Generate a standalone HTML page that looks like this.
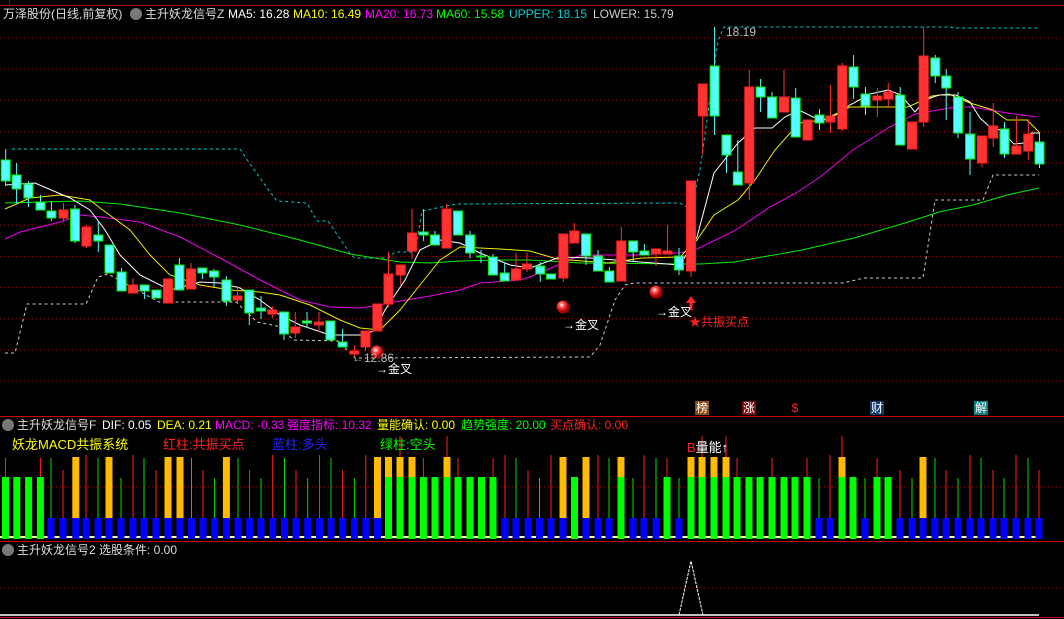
<!DOCTYPE html>
<html><head><meta charset="utf-8"><style>
body{margin:0;background:#000;width:1064px;height:619px;overflow:hidden;position:relative;font-family:"Liberation Sans","Noto Sans CJK SC",sans-serif;}
.t{position:absolute;font-size:12px;white-space:nowrap;line-height:14px}
.ic{position:absolute;width:12px;height:12px;border-radius:50%;background:#777}
.bx{position:absolute;top:401px;width:14px;height:14px;font-size:12px;line-height:14px;text-align:center;color:#fff}
svg{position:absolute;left:0;top:0}
</style></head><body>
<svg id="s" width="1064" height="619"></svg>
<div class="t" style="left:3px;top:7px;color:#ddd">万泽股份(日线,前复权)</div>
<div class="ic" style="left:130px;top:8px"></div>
<div class="t" style="left:145px;top:7px;color:#ddd">主升妖龙信号Z</div>
<div class="t" style="left:228px;top:7px;color:#fff">MA5: 16.28</div>
<div class="t" style="left:293px;top:7px;color:#ff0">MA10: 16.49</div>
<div class="t" style="left:365px;top:7px;color:#f0f">MA20: 16.73</div>
<div class="t" style="left:436px;top:7px;color:#0f0">MA60: 15.58</div>
<div class="t" style="left:509px;top:7px;color:#0cc">UPPER: 18.15</div>
<div class="t" style="left:593px;top:7px;color:#ccc">LOWER: 15.79</div>
<div class="t" style="left:726px;top:25px;color:#bbb">18.19</div>
<div class="t" style="left:352px;top:351px;color:#bbb">←12.86</div>
<div class="t" style="left:376px;top:362px;color:#fff">→金叉</div>
<div class="t" style="left:563px;top:318px;color:#fff">→金叉</div>
<div class="t" style="left:656px;top:305px;color:#fff">→金叉</div>
<div class="t" style="left:689px;top:315px;color:#f22">★共振买点</div>
<div class="bx" style="left:695px;background:#8b4a10">榜</div>
<div class="bx" style="left:742px;background:#7a0a0a">涨</div>
<div class="bx" style="left:788px;color:#f22">$</div>
<div class="bx" style="left:870px;background:#123a6a">财</div>
<div class="bx" style="left:974px;background:#0e7f7f">解</div>
<div class="ic" style="left:2px;top:419px"></div>
<div class="t" style="left:17px;top:418px;color:#ddd">主升妖龙信号F</div>
<div class="t" style="left:102px;top:418px;color:#fff">DIF: 0.05</div>
<div class="t" style="left:157px;top:418px;color:#ff0">DEA: 0.21</div>
<div class="t" style="left:215px;top:418px;color:#f0f">MACD: -0.33</div>
<div class="t" style="left:287px;top:418px;color:#f0f">强度指标: 10.32</div>
<div class="t" style="left:377px;top:418px;color:#ff0">量能确认: 0.00</div>
<div class="t" style="left:461px;top:418px;color:#0f0">趋势强度: 20.00</div>
<div class="t" style="left:550px;top:418px;color:#f22">买点确认: 0.00</div>
<div class="t" style="left:12px;top:438px;color:#ff0;font-size:13px">妖龙MACD共振系统</div>
<div class="t" style="left:163px;top:438px;color:#f22;font-size:13px">红柱:共振买点</div>
<div class="t" style="left:272px;top:438px;color:#22f;font-size:13px">蓝柱:多头</div>
<div class="t" style="left:380px;top:438px;color:#0f0;font-size:13px">绿柱:空头</div>
<div class="t" style="left:687px;top:441px;color:#fff;font-size:13px"><span style="color:#f22">B</span>量能↑</div>
<div class="ic" style="left:2px;top:544px"></div>
<div class="t" style="left:17px;top:543px;color:#ddd">主升妖龙信号2 选股条件: 0.00</div>
<script>
var s='';
function L(x1,y1,x2,y2,c,w,d){s+='<line x1="'+x1+'" y1="'+y1+'" x2="'+x2+'" y2="'+y2+'" stroke="'+c+'" stroke-width="'+(w||1)+'"'+(d?' stroke-dasharray="'+d+'"':'')+'/>';}
function R(x,y,w,h,f,st){s+='<rect x="'+x+'" y="'+y+'" width="'+w+'" height="'+h+'" fill="'+f+'"'+(st?' stroke="'+st+'"':'')+'/>';}
function P(pts,c,d){s+='<polyline fill="none" stroke="'+c+'" stroke-width="1"'+(d?' stroke-dasharray="'+d+'"':'')+' points="'+pts+'"/>';}
for(var y=38;y<390;y+=31.2)L(0,y,1064,y,'#a00',1,'1 3');
L(0,487,1064,487,'#a00',1,'1 3');L(0,588,1064,588,'#a00',1,'1 3');
L(0,416.5,1064,416.5,'#c00');L(0,541.5,1064,541.5,'#c00');L(0,617.5,1064,617.5,'#c00');
L(0,5.5,1064,5.5,'#a00');L(9.5,0,9.5,5,'#a00');
P('5,353 15,353 27,304 86,304 98,277 108,274 159,302 236,302 257,322 277,326 294,340 338,341 355,358 590,357 600,345 615,300 625,285 634,283 843,283 864,278 923,278 935,200 983,200 993,175 1039,175','#ccc','3 3');
P('12,149 240,149 250,164 270,192 277,201 307,203 317,221 328,221 351,255 355,258 388,258 395,252 415,252 422,211 456,204 680,203 687,207 693,200 700,170 707,120 716,53 719,38 724,27 949,27 956,28 1037,28','#0cc','3 3');
P('5,203 80,201 120,204 180,213 240,225 300,240 350,254 400,262 430,263 460,261 500,260 530,260 581,263 680,264 700,264 734,262 802,250 854,238 905,223 939,212 973,205 1007,195 1039,188','#0e0');
P('5,239 20,232 60,222 80,215 100,217 140,222 180,237 220,258 260,280 300,300 330,307 360,308 380,305 400,301 430,296 460,290 480,283 520,280 530,277 581,255 632,255 679,253 697,249 736,230 770,207 796,193 820,177 853,150 888,128 915,114 956,107 972,107 1007,113 1037,117','#e0e');
P('5,209 30,198 60,195 90,200 100,208 130,230 150,255 170,275 200,285 230,290 260,292 280,295 310,305 340,320 360,328 380,330 400,310 420,285 440,260 460,247 500,249 530,251 557,259 608,263 642,258 680,257 697,240 714,215 738,200 755,180 775,150 799,123 823,120 850,107 884,107 908,107 932,96 949,94 970,103 993,110 1007,120 1027,120 1039,132','#ee0');
P('5,185 35,183 70,198 90,210 105,230 120,255 140,275 170,290 200,282 220,283 240,288 260,300 280,315 300,325 330,335 365,335 375,330 385,310 405,280 420,250 440,240 460,243 480,253 510,265 530,268 560,257 590,258 640,262 680,265 697,237 714,173 738,143 755,128 772,128 785,117 799,110 813,117 826,120 836,115 850,105 870,94 888,90 901,95 915,112 925,100 939,95 956,95 970,102 980,118 990,127 1000,130 1014,144 1024,143 1031,133 1039,133','#fff');
var C=[[5.7,160,181,149,186,0],[16.6,175,189,163,204,0],[28.4,184,198,181,207,0],[40.5,202,210,195,210,0],[51.4,211,218,201,221,0],[63.5,210,218,203,221,1],[75,209,241,205,243,0],[86.5,227,246,225,248,1],[98.3,235,241,221,252,0],[109.5,245,273,245,273,0],[121.6,272,291,268,291,0],[133,285,293,278,293,1],[144.6,285,291,285,299,0],[156.4,290,298,290,298,0],[168,279,303,279,303,1],[179.4,265,290,258,290,0],[191,269,289,263,289,1],[202.4,268,273,268,279,0],[214,271,277,269,287,0],[226.4,280,301,276,306,0],[237.5,296,300,286,303,1],[249.3,290,313,290,325,0],[261,308,311,296,319,0],[272.3,310,314,306,318,1],[284,312,334,312,340,0],[295.3,327,333,312,338,1],[307,321,323,312,328,0],[319,322,325,312,332,1],[330.4,321,340,321,340,0],[342.6,342,347,329,347,0],[354.4,351,354,345,357,1],[365.5,331,347,331,351,1],[377.4,304,331,304,331,1],[388.5,274,304,252,307,1],[400.7,265,275,265,285,1],[412,233,251,209,259,1],[423.6,232,235,209,241,0],[435,235,245,231,245,0],[446.6,209,248,204,248,1],[458,211,235,211,235,0],[470,235,253,231,258,0],[481,256,257,250,263,0],[493,257,275,254,275,0],[504.7,273,281,263,281,0],[516,269,280,253,280,1],[527,264,269,253,272,1],[540.2,266,274,262,282,0],[551,274,279,274,279,0],[563.4,234,278,234,282,1],[574.3,231,243,223,243,1],[586,234,256,234,265,0],[598,256,271,250,271,0],[609.4,271,282,267,282,0],[621.3,241,281,227,281,1],[633.2,241,252,241,262,0],[644.4,251,255,244,255,0],[656,249,254,249,266,1],[667.6,251,254,225,254,1],[679,256,270,248,275,0],[691,181,271,181,277,1],[702.7,84,116,84,155,1],[714.6,66,116,27,135,0],[726.5,135,155,135,173,0],[737.8,172,185,140,185,0],[749.3,87,183,70,200,1],[760.6,87,97,79,112,0],[772,97,118,92,118,0],[784,97,112,70,112,1],[795.7,98,137,88,137,0],[807.6,120,140,120,140,1],[819.5,115,123,109,130,0],[830.4,116,122,85,133,1],[842.3,66,129,63,131,1],[853.6,67,87,55,99,0],[865.5,94,106,87,115,0],[877.4,96,100,88,117,1],[888.3,92,99,83,108,1],[900.2,95,145,87,145,0],[912,122,149,122,149,1],[923.7,56,122,27,127,1],[935.3,58,76,55,83,0],[946.2,76,88,69,120,0],[958,97,133,92,138,0],[970,134,159,112,175,0],[982,136,163,136,167,1],[993.2,126,138,103,147,1],[1004.5,129,154,122,158,0],[1016.4,146,154,116,154,1],[1028.3,134,151,119,160,1],[1039.5,142,164,132,168,0]];
C.forEach(function(c){var x=c[0],u=c[5];var col=u?'#ff3333':'#55ffff',b=u?'#ff2020':'#00ee00';L(x,c[3],x,c[4],u?'#ff3333':'#55ffff');R(x-4.5,c[1],9,Math.max(1,c[2]-c[1]),col,b);});
/* bars: G green, B blue, OB orange+blue, OG orange+green */
var B=[[5.5,'G'],[16.8,'G'],[28.6,'G'],[40.4,'G'],[51,'B'],[63,'B'],[75.8,'OB'],[86,'B'],[98,'B'],[109,'OB'],[121,'B'],[133,'B'],[144,'B'],[156,'B'],[168,'OB'],[180,'OB'],[191.5,'B'],[203,'B'],[214.6,'B'],[226.4,'OB'],[238,'B'],[249.6,'B'],[261,'B'],[272.7,'B'],[284.5,'B'],[296,'B'],[307.7,'B'],[319.5,'B'],[331,'B'],[342.6,'B'],[354.4,'B'],[365.8,'B'],[377.5,'OB'],[388.5,'OG'],[400,'OG'],[412,'OG'],[423.4,'G'],[435,'G'],[447,'OG'],[458,'G'],[470,'G'],[481.5,'G'],[493,'G'],[505,'B'],[516,'B'],[528,'B'],[539.5,'B'],[551,'B'],[563,'OB'],[574.5,'G'],[586,'OB'],[598,'B'],[609,'B'],[621,'OG'],[633,'B'],[644,'B'],[656,'B'],[667,'G'],[679,'B'],[691,'OG'],[702,'OG'],[714,'OG'],[726,'OG'],[737,'G'],[749,'G'],[760,'G'],[772,'G'],[784,'G'],[795,'G'],[807,'G'],[819,'B'],[830,'B'],[842,'OG'],[853,'G'],[865,'B'],[877,'G'],[888,'G'],[900,'B'],[912,'B'],[923,'OB'],[935,'B'],[946,'B'],[958,'B'],[970,'B'],[981,'B'],[993,'B'],[1004,'B'],[1016,'B'],[1028,'B'],[1039,'B']];
L(0,537,1040,537,'#ffffaa',2);
B.forEach(function(b,i){var x=b[0],t=b[1];
 if(t=='B'){var tp=[458,470,478,455][i%4];L(x,tp,x,518,i%2?'#ff2020':'#00dd00');}
 if(t=='G'&&i%3==0)L(x,458,x,477,'#ff2020');
 if(t=='OG'&&i%2==0)L(x,436,x,457,'#ff2020');
 if(t[0]=='O')R(x-3.5,457,7,t=='OB'?61:20,'#ffbb00');
 if(t.slice(-1)=='G')R(x-3.5,477,7,62,'#00ff00');
 if(t.slice(-1)=='B')R(x-3.5,518,7,21,'#0000ff');
});
L(0,615,1039,615,'#fff',1.5);
P('679,615 691,561 703,615','#fff','3 1');
s+='<defs><radialGradient id="g" cx="40%" cy="35%"><stop offset="0" stop-color="#fff"/><stop offset="0.45" stop-color="#f44"/><stop offset="1" stop-color="#a00"/></radialGradient></defs>';
[[377,352],[563,307],[656,292]].forEach(function(p){s+='<circle cx="'+p[0]+'" cy="'+p[1]+'" r="6.5" fill="url(#g)"/>';});
s+='<path d="M691,296 L686,303 L689.5,303 L689.5,310 L692.5,310 L692.5,303 L696,303 Z" fill="#f22"/>';
document.getElementById('s').innerHTML=s;
</script>
</body></html>
